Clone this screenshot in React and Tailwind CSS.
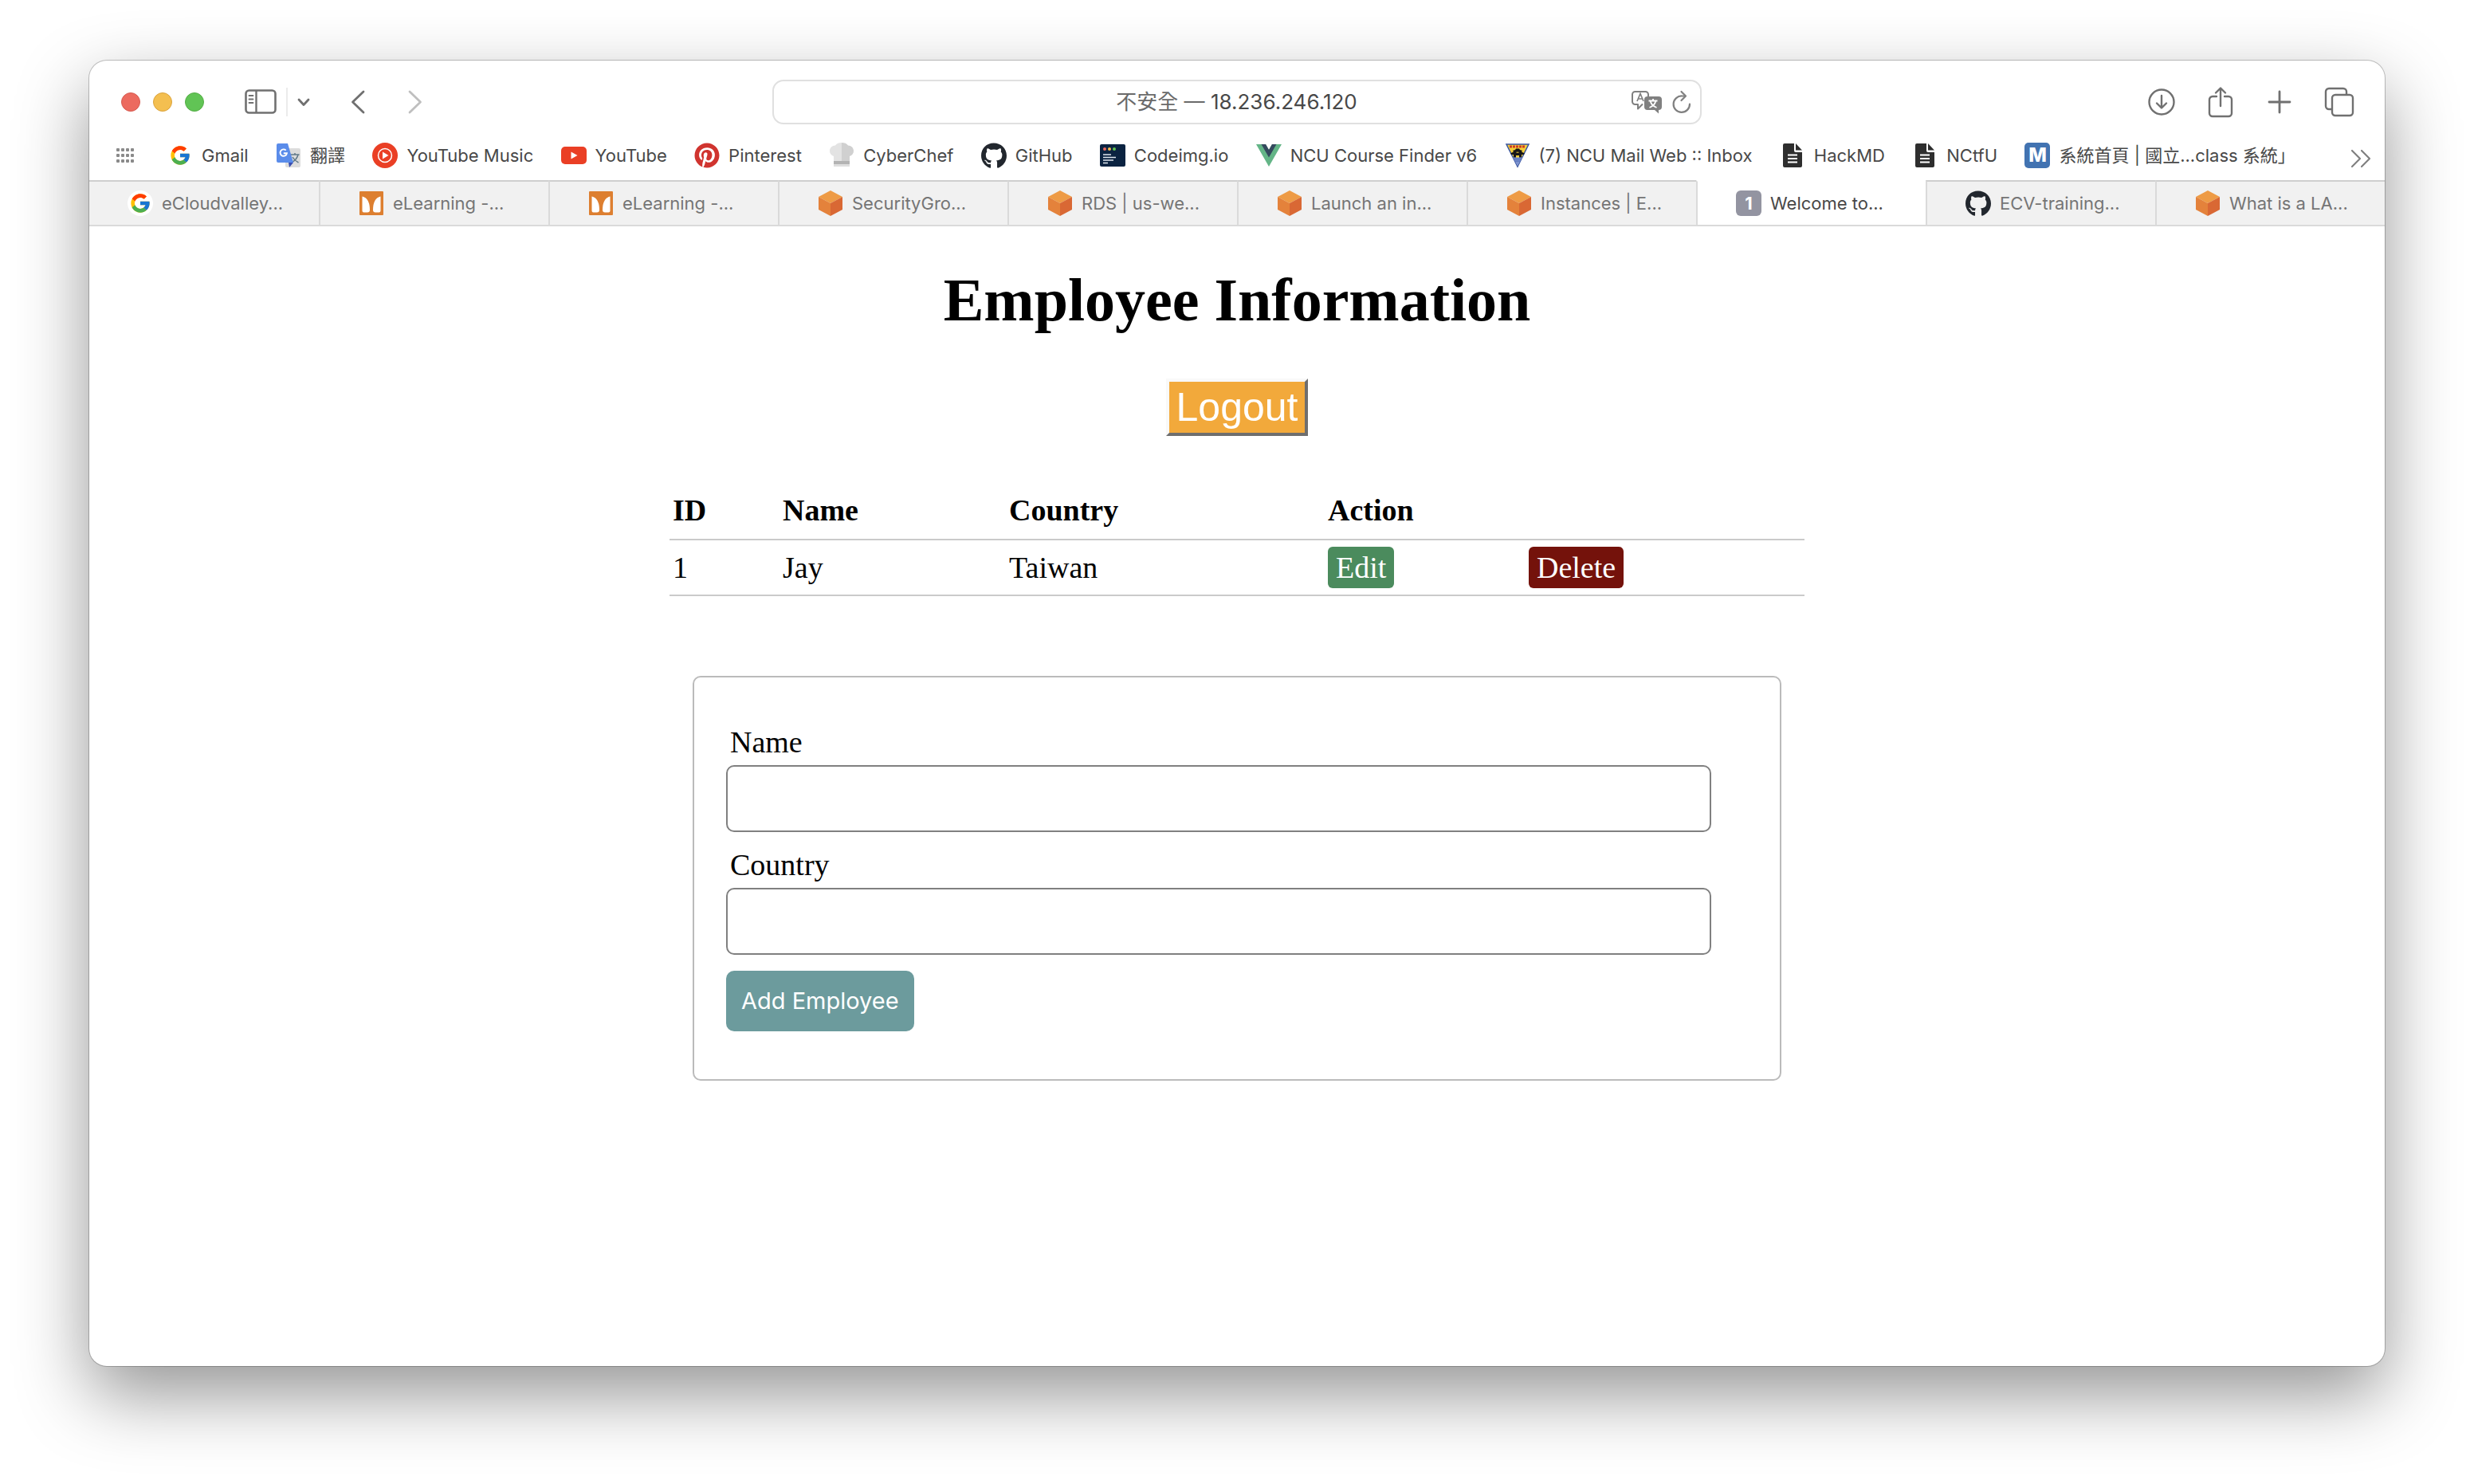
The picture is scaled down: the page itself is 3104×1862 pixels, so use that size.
import React from "react";
import { FcGoogle } from "react-icons/fc";
import { FaGithub, FaPinterest } from "react-icons/fa";

const Svg = ({ w, h, children, box }) => (
  <svg width={w} height={h} viewBox={box || `0 0 ${w} ${h}`} fill="none" className="shrink-0" aria-hidden="true">
    {children}
  </svg>
);

const Google = () => <FcGoogle className="size-[28px]" />;
const GitHub = () => <FaGithub className="size-[33px] text-[#22272e]" />;

const Translate = () => (
  <Svg w={32} h={32}>
    <rect x="12" y="7" width="19" height="24" rx="2" fill="#dcdcdc" />
    <path d="M18.500 15h11M24 13v2M28 15c-1 4.500-4 7.500-7.500 9.500M21 18c2 3.500 4.500 5.500 7.500 7" stroke="#607988" strokeWidth="1.500" />
    <path d="M16 25h6l-5 6z" fill="#3a4fb0" />
    <path d="M3 1h12l7 24H3a2 2 0 0 1-2-2V3a2 2 0 0 1 2-2z" fill="#5a8cea" />
    <path d="M12.700 9.600a4.200 4.200 0 1 0 1.200 3.700H9.800" stroke="#fff" strokeWidth="1.900" />
  </Svg>
);

const YouTubeMusic = () => (
  <Svg w={32} h={32}>
    <circle cx="16" cy="16" r="16" fill="#ea3f25" />
    <circle cx="16" cy="16" r="8.500" stroke="#fff" strokeWidth="1.500" />
    <path d="M13 11.500v9l7.500-4.500z" fill="#fff" />
  </Svg>
);

const YouTube = () => (
  <Svg w={32} h={32}>
    <rect x="0" y="5" width="32" height="22" rx="5" fill="#ea3f25" />
    <path d="M12.500 11.500v9l8-4.500z" fill="#fff" />
  </Svg>
);

const Pinterest = () => <FaPinterest className="size-[32px] text-[#d0342f]" />;

const Chef = () => (
  <Svg w={32} h={32}>
    <path d="M6 24v-7C3 16 1 13.500 1 10.500 1 6.500 4 3.500 8 3.500 9.500 1 12.500 0 16 0v24z" fill="#e3e3e3" />
    <path d="M26 24v-7c3-1 5-3.500 5-6.500 0-4-3-7-7-7C22.500 1 19.500 0 16 0v24z" fill="#d0d0d0" />
    <path d="M6 23h20v4H6z" fill="#b3b3b3" />
    <path d="M6 27h20v3H6z" fill="#dedede" />
  </Svg>
);

const CodeImg = () => (
  <Svg w={32} h={32}>
    <rect x="0" y="2" width="32" height="28" rx="2" fill="#0b2341" />
    <circle cx="6" cy="8" r="2" fill="#ed6a5e" />
    <circle cx="12" cy="8" r="2" fill="#f5bf4f" />
    <circle cx="18" cy="8" r="2" fill="#61c554" />
    <path d="M4 15h10M4 18.500h16M4 22h13M4 25.500h6" stroke="#dfe6ee" strokeWidth="1.300" />
  </Svg>
);

const Vue = () => (
  <Svg w={32} h={32}>
    <path d="M0 2h12l4 7 4-7h12L16 30z" fill="#64b587" />
    <path d="M6.500 2H12l4 7 4-7h5.500L16 18.500z" fill="#35495e" />
  </Svg>
);

const NcuMail = () => (
  <Svg w={32} h={32}>
    <path d="M2 2h28L16 30z" fill="#f3cf3a" stroke="#3a56a0" strokeWidth="1.500" />
    <path d="M6 5h20" stroke="#cf3a24" strokeWidth="3" strokeDasharray="3 1" />
    <path d="M14 7.500h4l1 1.500 3 1-1 1.500 4 2-1.500 1.500H21V19h-3v-3h-4v3h-3v-4H8.500L7 13.500l4-2L10 10l3-1z" fill="#171717" />
    <path d="M14.500 12.200h3" stroke="#f3cf3a" />
    <path d="M10 18.500h12l-6 11z" fill="#7d93cf" />
    <path d="M11 20.500h10M12 23h8" stroke="#4c68b4" />
  </Svg>
);

const Doc = () => (
  <Svg w={32} h={32}>
    <path d="M4 3a2 2 0 0 1 2-2h12v9a2 2 0 0 0 2 2h8v17a2 2 0 0 1-2 2H6a2 2 0 0 1-2-2z" fill="#2e2e2e" />
    <path d="M20 1l8 8.500h-8z" fill="#2e2e2e" />
    <path d="M10 15.500h12M10 20h12M10 24.500h12" stroke="#fff" strokeWidth="2" />
  </Svg>
);

const MBadge = () => (
  <span className="flex size-[32px] items-center justify-center rounded-[5px] bg-[#4273b1] font-['Inter'] text-[24px] font-extrabold text-white">M</span>
);

const Elearn = () => (
  <Svg w={32} h={32}>
    <rect x="1" y="1" width="30" height="30" rx="1" fill="#dd7f30" />
    <path d="M4.500 7.500C11 9 14 15 14 24.500a3 3 0 0 1-3 3H6.500a2 2 0 0 1-2-2z" fill="#fff" />
    <path d="M27.500 7.500C21 9 18 15 18 24.500a3 3 0 0 0 3 3h4.500a2 2 0 0 0 2-2z" fill="#fff" />
  </Svg>
);

const Cube = () => (
  <Svg w={32} h={32}>
    <path d="M16 0l15 8-15 8L1 8z" fill="#ee9b45" />
    <path d="M1 8l15 8v16L1 24z" fill="#e4823b" />
    <path d="M31 8l-15 8v16l15-8z" fill="#d96834" />
  </Svg>
);

const GoogleDisc = () => (
  <span className="flex size-[32px] items-center justify-center rounded-full bg-white">
    <FcGoogle className="size-[28px]" />
  </span>
);

const OneBadge = () => (
  <span className="flex size-[32px] items-center justify-center rounded-[6px] bg-[#9394a1] font-['Inter'] text-[22px] font-bold text-white">1</span>
);

const bookmarks = [
  ["Gmail", Google],
  ["翻譯", Translate],
  ["YouTube Music", YouTubeMusic],
  ["YouTube", YouTube],
  ["Pinterest", Pinterest],
  ["CyberChef", Chef],
  ["GitHub", GitHub],
  ["Codeimg.io", CodeImg],
  ["NCU Course Finder v6", Vue],
  ["(7) NCU Mail Web :: Inbox", NcuMail],
  ["HackMD", Doc],
  ["NCtfU", Doc],
  ["系統首頁 | 國立...class 系統」", MBadge],
];

const tabs = [
  ["eCloudvalley...", GoogleDisc],
  ["eLearning -...", Elearn],
  ["eLearning -...", Elearn],
  ["SecurityGro...", Cube],
  ["RDS | us-we...", Cube],
  ["Launch an in...", Cube],
  ["Instances | E...", Cube],
  ["Welcome to...", OneBadge, true],
  ["ECV-training...", GitHub],
  ["What is a LA...", Cube],
];

function Toolbar() {
  return (
    <div className="grid h-[103px] grid-cols-[1fr_1166px_1fr] items-center px-[38px] text-[#707070]">
      <div className="flex items-center pl-[2px]">
        <div className="flex gap-[16px]">
          <button aria-label="Close" className="size-[24px] rounded-full border border-[#d65a50] bg-[#ec6a5f]" />
          <button aria-label="Minimize" className="size-[24px] rounded-full border border-[#dba33c] bg-[#f4bf50]" />
          <button aria-label="Zoom" className="size-[24px] rounded-full border border-[#54ad45] bg-[#61c455]" />
        </div>
        <button aria-label="Sidebar" className="ml-[51px]">
          <Svg w={40} h={32}>
            <rect x="1.500" y="1.500" width="37" height="28" rx="4" stroke="currentColor" strokeWidth="2.600" />
            <path d="M14.500 2v27" stroke="currentColor" strokeWidth="2.400" />
            <path d="M5.500 8h5M5.500 12.500h5M5.500 17h5" stroke="currentColor" strokeWidth="1.800" strokeLinecap="round" />
          </Svg>
        </button>
        <span className="ml-[12px] h-[36px] w-[2px] bg-[#ebebeb]" />
        <button aria-label="Tab groups" className="ml-[12px]">
          <Svg w={16} h={12}>
            <path d="M2 3l6 6.500L14 3" stroke="currentColor" strokeWidth="2.800" strokeLinecap="round" strokeLinejoin="round" />
          </Svg>
        </button>
        <button aria-label="Back" className="ml-[50px]">
          <Svg w={20} h={32}>
            <path d="M17 3L3.500 16 17 29" stroke="currentColor" strokeWidth="2.800" strokeLinecap="round" strokeLinejoin="round" />
          </Svg>
        </button>
        <button aria-label="Forward" className="ml-[52px] text-[#bfbfbf]">
          <Svg w={20} h={32}>
            <path d="M3 3l13.500 13L3 29" stroke="currentColor" strokeWidth="2.800" strokeLinecap="round" strokeLinejoin="round" />
          </Svg>
        </button>
      </div>

      <div className="flex h-[56px] items-center rounded-[14px] border-2 border-[#e0e0e0] pr-[11px] pl-[86px]">
        <div className="flex-1 text-center text-[26px] text-[#6a6a6a]">
          不安全 — <span className="text-[#484848]">18.236.246.120</span>
        </div>
        <button aria-label="Translate page" className="mr-[12px]">
          <Svg w={40} h={30}>
            <path d="M15 17.500l-6 6v-5.500H5.500a3.500 3.500 0 0 1-3.500-3.500v-9a3.500 3.500 0 0 1 3.500-3.500h13A3.500 3.500 0 0 1 22 5.500V8" stroke="#808080" strokeWidth="2" strokeLinejoin="round" />
            <path d="M8 14l4-9.500 4 9.500M9.500 11h5" stroke="#808080" strokeWidth="1.700" />
            <path d="M21 8h14a4 4 0 0 1 4 4v9a4 4 0 0 1-4 4v4.500l-5-4.500h-9a4 4 0 0 1-4-4v-9a4 4 0 0 1 4-4z" fill="#808080" />
            <path d="M22.500 13.500h11M28 11v2.500M31.500 13.500c-1 4-4 7-8 8.500M24.500 13.500c1 4 4 7 8 8.500" stroke="#fff" strokeWidth="1.800" />
          </Svg>
        </button>
        <button aria-label="Reload">
          <Svg w={24} h={30}>
            <path d="M16 7.500h-3.500A10.200 10.200 0 1 0 22 17.500" stroke="#808080" strokeWidth="2.200" strokeLinecap="round" />
            <path d="M11.500 2l5.500 5.500-5.500 5.500" stroke="#808080" strokeWidth="2.200" strokeLinecap="round" strokeLinejoin="round" />
          </Svg>
        </button>
      </div>

      <div className="flex items-center justify-end">
        <button aria-label="Downloads" className="mr-[40px]">
          <Svg w={36} h={36}>
            <circle cx="18" cy="18" r="15.500" stroke="currentColor" strokeWidth="2.400" />
            <path d="M18 10v15M12 19.500l6 6 6-6" stroke="currentColor" strokeWidth="2.400" strokeLinecap="round" strokeLinejoin="round" />
          </Svg>
        </button>
        <button aria-label="Share" className="mr-[42px]">
          <Svg w={32} h={40}>
            <path d="M11 13H6a4 4 0 0 0-4 4v17a4 4 0 0 0 4 4h20a4 4 0 0 0 4-4V17a4 4 0 0 0-4-4h-5" stroke="currentColor" strokeWidth="2.400" strokeLinecap="round" />
            <path d="M16 25V3M10 8.500L16 2.500l6 6" stroke="currentColor" strokeWidth="2.400" strokeLinecap="round" strokeLinejoin="round" />
          </Svg>
        </button>
        <button aria-label="New tab" className="mr-[40px]">
          <Svg w={32} h={32}>
            <path d="M16 3v26M3 16h26" stroke="currentColor" strokeWidth="2.800" strokeLinecap="round" />
          </Svg>
        </button>
        <button aria-label="Tab overview">
          <Svg w={38} h={38}>
            <path d="M10 28H6a4 4 0 0 1-4-4V6a4 4 0 0 1 4-4h18a4 4 0 0 1 4 4v3" stroke="currentColor" strokeWidth="2.400" />
            <rect x="10" y="10" width="26" height="26" rx="4" stroke="currentColor" strokeWidth="2.400" />
          </Svg>
        </button>
      </div>
    </div>
  );
}

function Bookmarks() {
  return (
    <nav className="flex h-[47px] items-start pr-[16px] pl-[33px] text-[22px] leading-[32px] text-[#484848]">
      <button aria-label="Show bookmarks" className="flex h-[32px] items-center">
        <Svg w={24} h={20}>
          {[3, 9, 15, 21].map((x) => [3, 10, 17].map((y) => (
            <rect key={x + "-" + y} x={x - 2} y={y - 2} width="4" height="4" rx="1" fill="#8a8a8a" />
          )))}
        </Svg>
      </button>
      <div className="mr-[68px] ml-[41px] flex flex-1 justify-between">
        {bookmarks.map(([label, Icon]) => (
          <a key={label} href="#" className="flex items-center gap-[11px] whitespace-nowrap">
            <span className="flex size-[32px] items-center justify-center"><Icon /></span>
            {label}
          </a>
        ))}
      </div>
      <button aria-label="More bookmarks" className="mt-[6px]">
        <Svg w={28} h={28}>
          <path d="M3 4l10 10L3 24M15 4l10 10-10 10" stroke="#808080" strokeWidth="2.200" strokeLinecap="round" strokeLinejoin="round" />
        </Svg>
      </button>
    </nav>
  );
}

function Tabs() {
  return (
    <div role="tablist" className="grid h-[58px] grid-cols-10 border-b-2 border-[#dadada] text-[22px]">
      {tabs.map(([label, Icon, active], i) => (
        <button
          key={i}
          role="tab"
          aria-selected={!!active}
          className={
            active
              ? "flex items-center gap-[11px] border-t-2 border-l-2 border-t-transparent border-l-[#dadada] bg-white pl-[48px] whitespace-nowrap text-[#484848]"
              : "flex items-center gap-[11px] border-t-2 border-l-2 border-t-[#cfcfcf] border-l-[#dadada] bg-[#f1f1f1] pl-[48px] whitespace-nowrap text-[#757575] first:border-l-0"
          }
        >
          <span className="flex size-[32px] items-center justify-center"><Icon /></span>
          {label}
        </button>
      ))}
    </div>
  );
}

function EmployeePage() {
  return (
    <main className="flex flex-col items-center font-['Liberation_Serif','Times_New_Roman',serif] text-[38px] leading-[44px] text-black">
      <h1 className="mt-[48px] text-[76px] leading-[88px] font-bold">Employee Information</h1>
      <button className="mt-[55px] border-4 border-t-[#f9f9f9] border-r-[#6e6e6e] border-b-[#6e6e6e] border-l-[#f9f9f9] bg-[#f2a93b] px-[9px] py-[3px] font-['Liberation_Sans',Arial,sans-serif] text-[50px] leading-[58px] text-white">
        Logout
      </button>
      <table className="mt-[56px] w-[1424px] max-w-full table-fixed text-left">
        <thead>
          <tr className="h-[74px] border-b-2 border-[#cacaca]">
            <th className="w-[138px] pl-[4px]">ID</th>
            <th className="w-[284px] pl-[4px]">Name</th>
            <th className="w-[400px] pl-[4px]">Country</th>
            <th className="w-[252px] pl-[4px]">Action</th>
            <td />
          </tr>
        </thead>
        <tbody>
          <tr className="h-[70px] border-b-2 border-[#cacaca]">
            <td className="pl-[4px]">1</td>
            <td className="pl-[4px]">Jay</td>
            <td className="pl-[4px]">Taiwan</td>
            <td className="pl-[4px]">
              <a href="#" className="inline-block rounded-[6px] bg-[#4b8b5d] px-[10px] py-[4px] align-middle text-white">Edit</a>
            </td>
            <td className="pl-[4px]">
              <a href="#" className="inline-block rounded-[6px] bg-[#74120b] px-[10px] py-[4px] align-middle text-white">Delete</a>
            </td>
          </tr>
        </tbody>
      </table>
      <form className="mt-[100px] w-[1366px] max-w-full rounded-[10px] border-2 border-[#bbbbbb] pt-[59px] pr-[86px] pb-[60px] pl-[40px]" onSubmit={(e) => e.preventDefault()}>
        <label htmlFor="name" className="block pl-[5px]">Name</label>
        <input id="name" type="text" className="mt-[7px] block h-[84px] w-full rounded-[10px] border-2 border-[#808080] bg-white px-[20px]" />
        <label htmlFor="country" className="mt-[19px] block pl-[5px]">Country</label>
        <input id="country" type="text" className="mt-[7px] block h-[84px] w-full rounded-[10px] border-2 border-[#808080] bg-white px-[20px]" />
        <button type="submit" className="mt-[20px] block h-[76px] rounded-[10px] bg-[#6c9b9d] px-[19px] font-['Inter',sans-serif] text-[29px] text-white">
          Add Employee
        </button>
      </form>
    </main>
  );
}

export default function App() {
  return (
    <div className="flex min-h-screen flex-col overflow-hidden bg-white px-[112px] pt-[76px] pb-[148px] font-['Inter','Noto_Sans_CJK_TC',sans-serif]">
      <div className="flex flex-1 flex-col overflow-hidden rounded-[22px] bg-white shadow-[0_0_0_1px_rgba(0,0,0,0.22),0_36px_90px_rgba(0,0,0,0.42)]">
        <Toolbar />
        <Bookmarks />
        <Tabs />
        <EmployeePage />
      </div>
    </div>
  );
}
